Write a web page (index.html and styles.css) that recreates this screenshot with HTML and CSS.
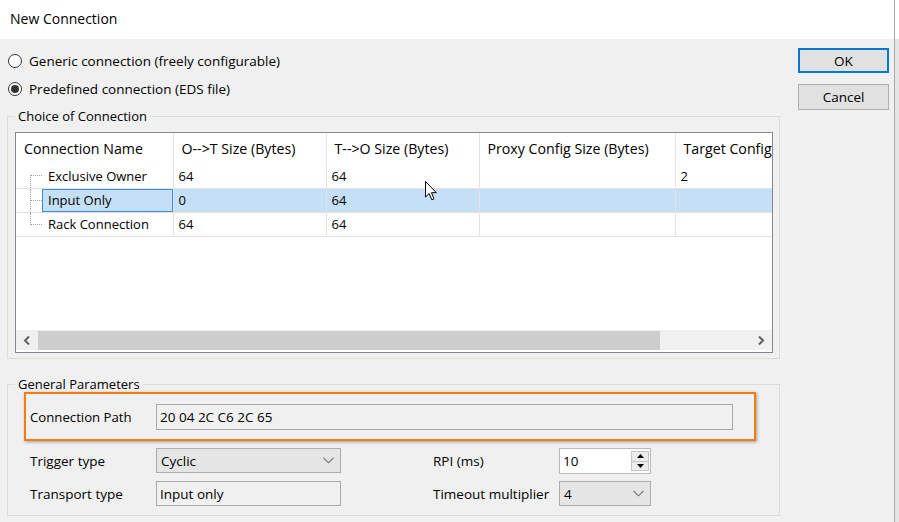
FILE: index.html
```html
<!DOCTYPE html>
<html>
<head>
<meta charset="utf-8">
<title>New Connection</title>
<link rel="stylesheet" href="styles.css">
</head>
<body>
<div class="screen">
  <div class="dialog">
    <div class="titlebar">New Connection</div>
    <div class="body">
      <div class="left">
        <div class="radios">
          <div class="radio"><span class="rb"></span>Generic connection (freely configurable)</div>
          <div class="radio"><span class="rb checked"></span>Predefined connection (EDS file)</div>
        </div>

        <fieldset class="group choice">
          <legend>Choice of Connection</legend>
          <div class="list">
            <div class="viewport">
              <table class="grid">
                <colgroup>
                  <col class="c1"><col class="c2"><col class="c3"><col class="c4"><col class="c5">
                </colgroup>
                <thead>
                  <tr>
                    <th>Connection Name</th>
                    <th>O--&gt;T Size (Bytes)</th>
                    <th>T--&gt;O Size (Bytes)</th>
                    <th>Proxy Config Size (Bytes)</th>
                    <th>Target Config</th>
                  </tr>
                </thead>
                <tbody>
                  <tr>
                    <td class="name"><div class="cellwrap"><span class="tree first"></span><span class="label">Exclusive Owner</span></div></td>
                    <td>64</td><td>64</td><td></td><td>2</td>
                  </tr>
                  <tr class="sel">
                    <td class="name"><div class="cellwrap"><span class="tree mid"></span><span class="label focus">Input Only</span></div></td>
                    <td>0</td><td>64</td><td></td><td></td>
                  </tr>
                  <tr>
                    <td class="name"><div class="cellwrap"><span class="tree last"></span><span class="label">Rack Connection</span></div></td>
                    <td>64</td><td>64</td><td></td><td></td>
                  </tr>
                </tbody>
              </table>
            </div>
            <div class="hscroll">
              <div class="sb-btn"><svg width="8" height="9" viewBox="0 0 8 9"><path d="M6 0.5 L2 4.5 L6 8.5" fill="none" stroke="#606060" stroke-width="2"/></svg></div>
              <div class="thumb"></div>
              <div class="track"></div>
              <div class="sb-btn"><svg width="8" height="9" viewBox="0 0 8 9"><path d="M2 0.5 L6 4.5 L2 8.5" fill="none" stroke="#606060" stroke-width="2"/></svg></div>
            </div>
          </div>
        </fieldset>

        <fieldset class="group general">
          <legend>General Parameters</legend>
          <div class="pathbox">
            <span class="field-label">Connection Path</span>
            <div class="textbox path">20 04 2C C6 2C 65</div>
          </div>
          <div class="params">
            <span class="field-label">Trigger type</span>
            <div class="combo"><span>Cyclic</span><svg width="11" height="7" viewBox="0 0 11 7"><path d="M0.5 0.8 L5.5 5.8 L10.5 0.8" fill="none" stroke="#707070" stroke-width="1.1"/></svg></div>
            <span class="spacer"></span>
            <span class="field-label">RPI (ms)</span>
            <div class="spin"><span>10</span>
              <div class="spin-btns">
                <div class="spin-btn"><svg width="7" height="4" viewBox="0 0 7 4"><path d="M0 4 L3.5 0 L7 4Z" fill="#000"/></svg></div>
                <div class="spin-btn"><svg width="7" height="4" viewBox="0 0 7 4"><path d="M0 0 L3.5 4 L7 0Z" fill="#000"/></svg></div>
              </div>
            </div>

            <span class="field-label">Transport type</span>
            <div class="textbox">Input only</div>
            <span class="spacer"></span>
            <span class="field-label">Timeout multiplier</span>
            <div class="combo"><span>4</span><svg width="11" height="7" viewBox="0 0 11 7"><path d="M0.5 0.8 L5.5 5.8 L10.5 0.8" fill="none" stroke="#707070" stroke-width="1.1"/></svg></div>
          </div>
        </fieldset>
      </div>

      <div class="buttons">
        <button class="btn default">OK</button>
        <button class="btn cancel">Cancel</button>
      </div>
    </div>
  </div>
  <div class="edge"></div>

  <svg class="cursor" width="13" height="21" viewBox="0 0 13 21">
    <path d="M0.5 0.5 L0.5 16 L4.2 12.5 L6.8 18.8 L9 17.9 L6.5 11.7 L11.3 11.7 Z" fill="#fff" stroke="#000" stroke-width="1" stroke-linejoin="round"/>
  </svg>
</div>
</body>
</html>
```
FILE: styles.css
```css
* { box-sizing: border-box; }
html, body { margin: 0; padding: 0; }
body {
  width: 899px;
  height: 522px;
  overflow: hidden;
  background: #f0f0f0;
  font-family: "Open Sans", "Noto Sans", sans-serif;
  font-size: 13.5px;
  color: #000;
}
.screen { position: relative; display: flex; width: 899px; height: 522px; }
.dialog { width: 894px; height: 522px; display: flex; flex-direction: column; background: #f0f0f0; flex: none; }
.titlebar { height: 39px; flex: none; background: #fff; padding-left: 10px; line-height: 38px; font-size: 14px; }
.edge {
  flex: 1;
  border-left: 1px solid #a9a9a9;
  background: linear-gradient(#ffffff 0 39px, #e4e4e4 39px);
}

.body { display: flex; flex: 1; padding-left: 7px; }
.left { width: 773px; flex: none; display: flex; flex-direction: column; }

/* radios */
.radios { padding-top: 8px; display: flex; flex-direction: column; }
.radio { height: 28px; display: flex; align-items: center; padding-left: 1px; }
.rb {
  width: 14px; height: 14px; flex: none;
  border: 1px solid #333; border-radius: 50%; background: #fff;
  margin-right: 7px;
  display: flex; align-items: center; justify-content: center;
}
.rb.checked::after { content: ""; width: 8px; height: 8px; border-radius: 50%; background: #333; }

/* group boxes */
.group { margin: 0; border: 1px solid #dcdcdc; min-width: 0; }
.group legend { padding: 0 3px; line-height: 16px; font-size: 13px; }
.choice { margin-top: 5px; padding: 8px 6px 5px 7px; }
.general { margin-top: 17px; padding: 0 6px 8px 7px; }

/* list view */
.list {
  height: 221px;
  border: 1px solid #828790;
  background: #fff;
  display: flex; flex-direction: column;
  padding-bottom: 2px;
}
.viewport { height: 197px; overflow: hidden; flex: none; }
.grid { border-collapse: collapse; table-layout: fixed; width: 779px; font-size: 13px; }
.c1 { width: 157px; } .c2 { width: 153px; } .c3 { width: 153px; } .c4 { width: 196px; } .c5 { width: 120px; }
.grid th {
  height: 31px; padding: 0 0 0 8px; font-weight: normal; font-size: 14.2px; text-align: left; white-space: nowrap; overflow: hidden;
  border-right: 1px solid #e5e5e5;
}
.grid td {
  height: 24px; padding: 0 0 0 5px; white-space: nowrap;
  border-right: 1px solid #e3e3e3; border-bottom: 1px solid #e3e3e3;
}
.grid tr.sel td { background: #c4dff6; }
.grid tr.sel td.name { background: #fff; }
.grid td.name { padding: 0; }
.cellwrap { display: flex; height: 23px; }
.tree { width: 26px; flex: none; position: relative; }
.tree::before {
  content: ""; position: absolute; left: 14px; top: 0; bottom: -1px;
  border-left: 1px dotted #a0a0a0;
}
.tree.first::before { top: 11px; }
.tree.last::before { bottom: 11px; }
.tree::after {
  content: ""; position: absolute; left: 15px; width: 11px; top: 11px;
  border-top: 1px dotted #a0a0a0;
}
.label { flex: 1; display: flex; align-items: center; padding-left: 5px; border: 1px solid transparent; }
.label.focus { background: #c4dff6; border-color: #3d8ee0; }

/* scrollbar */
.hscroll { height: 20px; flex: none; display: flex; background: #f0f0f0; }
.sb-btn { width: 22px; flex: none; display: flex; align-items: center; justify-content: center; }
.thumb { width: 622px; flex: none; background: #cdcdcd; margin-top: 1px; }
.track { flex: 1; }

/* general params */
.pathbox {
  width: 732px; height: 49px;
  margin-left: 9px;
  border: 2px solid #f57d0f;
  box-shadow: 1px 1px 3px rgba(0,0,0,0.35);
  display: flex; align-items: center; padding-left: 4px;
}
.pathbox .field-label { font-size: 13.2px; }
.field-label { width: 126px; flex: none; display: flex; align-items: center; }
.textbox {
  height: 26px; border: 1px solid #a8a8a8; background: #f0f0f0;
  padding-left: 3px; display: flex; align-items: center;
}
.textbox.path { width: 577px; }
.params {
  margin: 7px 0 0 15px;
  display: grid;
  grid-template-columns: 126px 185px 92px 126px 92px;
  grid-auto-rows: 26px;
  row-gap: 7px;
}
.params .textbox { height: 25px; }
.combo {
  height: 25px; border: 1px solid #acacac; background: #e5e5e5;
  padding: 0 6px 0 4px;
  display: flex; align-items: center; justify-content: space-between;
}
.spin {
  height: 26px; border: 1px solid #b9b9b9; background: #fff;
  padding: 2px 1px 2px 3px;
  display: flex; align-items: center; justify-content: space-between;
}
.spin-btns { display: flex; flex-direction: column; width: 18px; height: 20px; }
.spin-btn {
  flex: 1; display: flex; align-items: center; justify-content: center;
  background: #ececec; border: 1px solid #c6c6c6;
}
.spin-btn + .spin-btn { border-top: none; }

/* buttons */
.buttons { margin-left: 18px; padding-top: 9px; display: flex; flex-direction: column; }
.btn {
  font: inherit; color: #000;
  width: 91px; height: 25px; padding: 0;
  background: #e1e1e1; border: 1px solid #adadad;
}
.btn.default { border: 2px solid #0078d7; }
.btn.cancel { margin-top: 11px; height: 26px; }

.cursor { position: absolute; left: 425px; top: 181px; }
```
